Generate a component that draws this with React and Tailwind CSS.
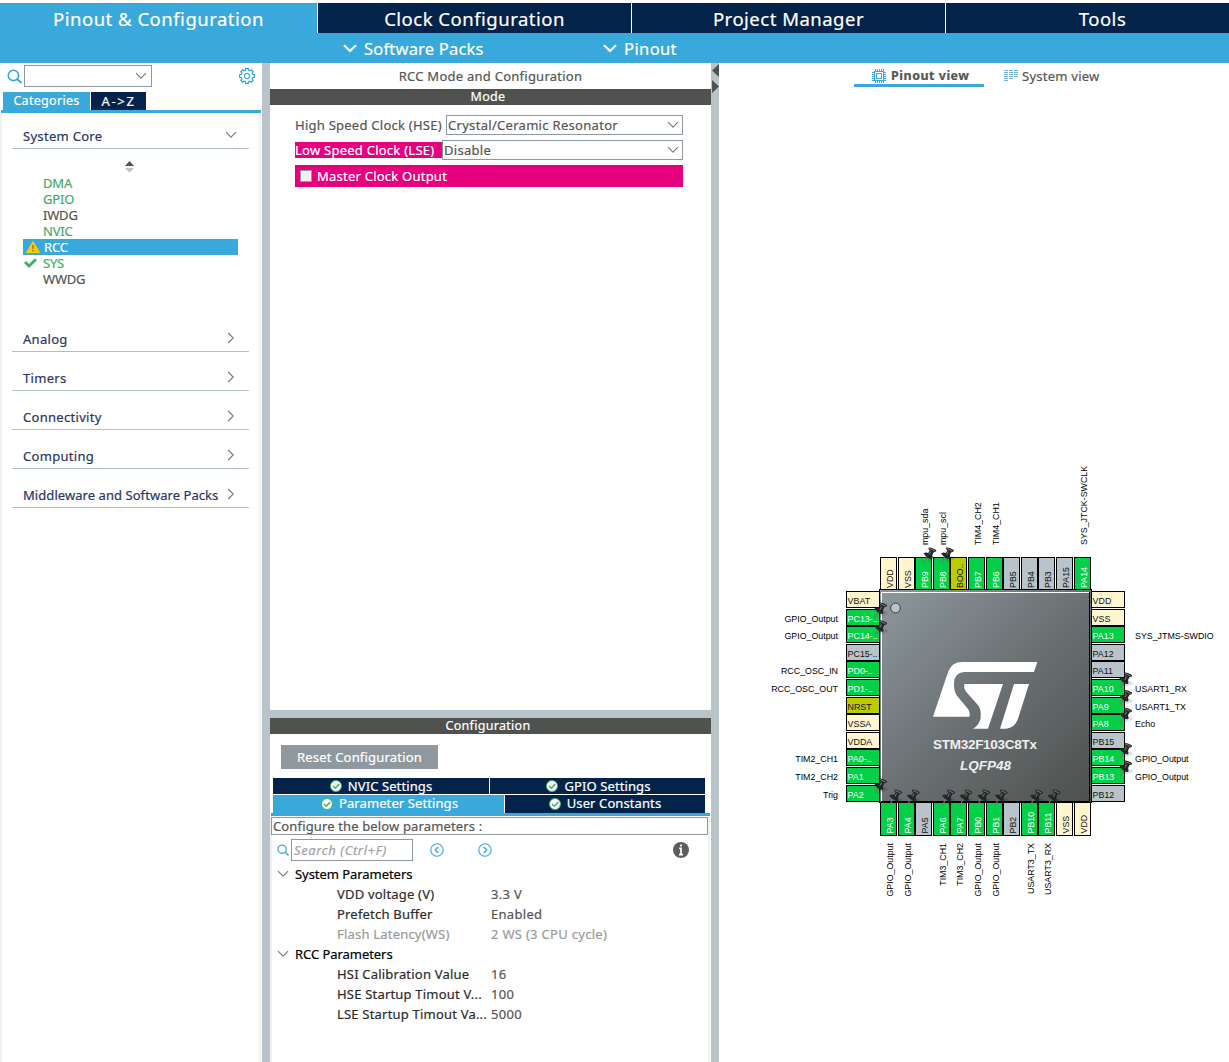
import React from "react";

const Chevron = ({ dir = "down", className = "" }) => (
  <svg
    className={className}
    width={dir === "down" ? 12 : 8}
    height={dir === "down" ? 8 : 12}
    fill="none"
    stroke="#777a7c"
    strokeWidth="1.1"
  >
    <path d={dir === "down" ? "M1 1.2 L6 6.2 L11 1.2" : "M1.2 1 L6.2 6 L1.2 11"} />
  </svg>
);

const MenuChevron = () => (
  <svg width="14" height="9" fill="none" stroke="white" strokeWidth="2.2">
    <path d="M1 1.2 L7 7 L13 1.2" />
  </svg>
);

const SearchIcon = ({ size }) => (
  <svg width={size} height={size} viewBox="0 0 14 14" fill="none" stroke="#39a9dc" strokeWidth="1.5" className="shrink-0">
    <circle cx="6" cy="6" r="4.8" />
    <path d="M9.6 9.6 L13.5 13.2" strokeWidth="1.8" />
  </svg>
);

const teeth = [0, 45, 90, 135, 180, 225, 270, 315];
const Gear = () => (
  <svg width="16" height="16" viewBox="-8 -8 16 16" fill="none" stroke="#39a9dc" strokeWidth="1.3">
    {teeth.map((a) => (
      <path key={a} transform={`rotate(${a})`} d="M-2.3 -5.2 L-1.6 -5.7 L-1.3 -7.4 H1.3 L1.6 -5.7 L2.3 -5.2" />
    ))}
    <circle r="2.6" />
  </svg>
);

const Check = () => (
  <svg width="12" height="12" viewBox="0 0 12 12">
    <circle cx="6" cy="6" r="5.5" fill="#fff" stroke="#3fae6a" strokeWidth="1" />
    <path d="M3 6 L5.3 8.2 L9.2 4" fill="none" stroke="#3fae6a" strokeWidth="1.5" />
  </svg>
);

const MainTab = ({ children, className }) => (
  <div className={"flex h-[30px] items-center justify-center pt-[3px] text-[18.5px] tracking-[0.5px] text-white " + className}>{children}</div>
);

const ComboBox = ({ value, className }) => (
  <div className={"flex h-5 items-center justify-between border border-[#8f989e] bg-white pr-[3px] pl-px " + className}>
    <span>{value}</span>
    <Chevron />
  </div>
);

const periph = [
  ["DMA", "text-[#3fae6a]"],
  ["GPIO", "text-[#3fae6a]"],
  ["IWDG", ""],
  ["NVIC", "text-[#3fae6a]"],
  ["RCC", "text-white bg-[#39a9dc]", "warn"],
  ["SYS", "text-[#3fae6a]", "ok"],
  ["WWDG", ""],
];

const Category = ({ name, open, className = "" }) => (
  <div className="ml-3 flex h-[39px] w-[237px] items-end justify-between border-b border-[#b1bfc6] pr-3 pb-[3px] pl-[11px] text-[#2a3763]">
    <span className={"whitespace-nowrap leading-[18px] " + className}>{name}</span>
    <Chevron dir={open ? "down" : "right"} className={open ? "mb-[6px]" : "mr-0.5 mb-1"} />
  </div>
);

function Sidebar() {
  return (
    <aside className="flex w-[262px] shrink-0 flex-col">
      <div className="flex h-[26px] items-center px-[7px]">
        <SearchIcon size={15} />
        <div className="ml-0.5 flex h-[22px] w-32 items-center justify-end border border-[#8f989e] pr-1">
          <Chevron />
        </div>
        <span className="ml-auto"><Gear /></span>
      </div>
      <div className="mt-[3px] ml-[3px] flex gap-px text-white">
        <div className="flex h-[18px] w-[87px] items-center justify-center bg-[#39a9dc] text-[12.5px]">Categories</div>
        <div className="flex h-[18px] w-[55px] items-center justify-center bg-[#03234b] tracking-[1.7px]">A-&gt;Z</div>
      </div>
      <div className="ml-px h-[3px] w-[260px] bg-[#39a9dc]" />
      <div className="mr-px grow border-x-2 border-[#f1f1f1]">
        <div className="-mt-[3px] -ml-0.5">
          <Category name="System Core" open />
          <div className="flex h-[26px] justify-center pt-3">
            <svg width="9" height="12"><path d="M0 5 L4.5 0 L9 5Z" fill="#50524f" /><path d="M0 7 L4.5 11.5 L9 7Z" fill="#c0c0c0" /></svg>
          </div>
          <ul className="ml-[23px] w-[215px]">
            {periph.map(([n, c, icon]) => (
              <li key={n} className={"flex h-4 items-center text-[13px] tracking-[-0.2px] " + c}>
                <span className={icon === "warn" ? "w-[21px] pl-[3px]" : "w-5 pl-px"}>
                  {icon === "warn" && (
                    <svg width="14" height="12"><path d="M7 0.5 L13.5 11.5 H0.5Z" fill="#fdca0a" stroke="#fdca0a" strokeLinejoin="round" /><path d="M7 4 V8 M7 9 V10.5" stroke="#6b5d20" strokeWidth="1.1" /></svg>
                  )}
                  {icon === "ok" && (
                    <svg width="13" height="10" fill="none" stroke="#3fae6a" strokeWidth="2.8"><path d="M1 4 L5 8 L12 1.2" /></svg>
                  )}
                </span>
                <span className="pt-px">{n}</span>
              </li>
            ))}
          </ul>
          <div className="h-[26px]" />
          {["Analog", "Timers", "Connectivity", "Computing"].map((n) => (
            <Category key={n} name={n} />
          ))}
          <Category name="Middleware and Software Packs" className="tracking-[0.06px]" />
        </div>
      </div>
    </aside>
  );
}

const SectionBar = ({ children }) => (
  <div className="flex h-4 items-center justify-center bg-[#50524f] pt-px pr-[5px] text-[12.5px] text-white">{children}</div>
);

const SettingTab = ({ children, className }) => (
  <div className={"flex items-center justify-center gap-[6px] tracking-[0.1px] text-white " + className}><Check />{children}</div>
);

const Param = ({ name, value, muted }) => (
  <div className={"flex h-5 items-center pl-[67px] " + (muted ? "text-[#9a9a9a]" : "text-[#2c2c2c]")}>
    <span className="w-[154px] whitespace-nowrap tracking-[0.2px]">{name}</span>
    <span className={muted ? "" : "text-[#555]"}>{value}</span>
  </div>
);

const Group = ({ name }) => (
  <div className="flex h-5 items-center pl-[7px] text-black"><Chevron /><span className="ml-[6px] tracking-[-0.05px]">{name}</span></div>
);

const RoundArrow = ({ left }) => (
  <svg width="14" height="14" fill="none" stroke="#39a9dc" strokeWidth="1.1">
    <circle cx="7" cy="7" r="6.2" />
    <path d={left ? "M8.3 4 L5.3 7 L8.3 10" : "M5.7 4 L8.7 7 L5.7 10"} strokeWidth="1.4" />
  </svg>
);

function ModePanel() {
  return (
    <section className="flex w-[441px] shrink-0 flex-col">
      <div className="flex h-[647px] flex-col">
        <div className="flex h-[26px] items-center justify-center tracking-[0.25px]">RCC Mode and Configuration</div>
        <SectionBar>Mode</SectionBar>
        <div className="mt-[10px] ml-[25px] flex w-[388px] items-center">
          <span className="w-[151px] whitespace-nowrap tracking-[0.25px]">High Speed Clock (HSE)</span>
          <ComboBox value="Crystal/Ceramic Resonator" className="grow" />
        </div>
        <div className="mt-[5px] ml-[25px] flex w-[388px] items-center">
          <span className="flex h-4 w-[147px] items-center bg-[#e6007e] tracking-[0.25px] whitespace-nowrap text-white">Low Speed Clock (LSE)</span>
          <ComboBox value="Disable" className="grow" />
        </div>
        <div className="mt-[5px] ml-[25px] flex h-[22px] w-[388px] items-center bg-[#e6007e] pl-[5px] tracking-[0.23px] text-white">
          <span className="mr-[5px] h-3 w-3 border border-[#8f989e] bg-[#eef0f1]" />
          Master Clock Output
        </div>
      </div>
      <div className="h-2 bg-[#b8c4ca]" />
      <SectionBar>Configuration</SectionBar>
      <div className="mt-[11px] ml-[11px] flex h-6 w-[157px] items-center justify-center bg-[#8f989e] tracking-[0.2px] text-white">Reset Configuration</div>
      <div className="mt-[9px] ml-[3px] flex w-[432px] gap-px">
        <SettingTab className="h-4 w-[216px] bg-[#03234b]">NVIC Settings</SettingTab>
        <SettingTab className="h-4 w-[215px] bg-[#03234b] pl-0.5">GPIO Settings</SettingTab>
      </div>
      <div className="mt-px ml-[3px] flex w-[432px] gap-px">
        <SettingTab className="h-[18px] w-[231px] bg-[#39a9dc] pb-px pl-0.5">Parameter Settings</SettingTab>
        <SettingTab className="h-[18px] w-[200px] bg-[#03234b] pb-px">User Constants</SettingTab>
      </div>
      <div className="ml-px h-[3px] w-[439px] bg-[#39a9dc]" />
      <div className="mr-px grow border-x-2 border-[#f1f1f1]">
        <div className="mt-px -ml-px flex h-[18px] w-[437px] items-center border border-[#8f989e] bg-white pl-px tracking-[0.14px]">Configure the below parameters :</div>
        <div className="mt-1 flex h-[22px] items-center pl-[5px]">
          <SearchIcon size={12} />
          <div className="ml-0.5 flex h-[22px] w-[122px] items-center border border-[#8f989e] pl-0.5 tracking-[0.6px] text-[#a3a3a3] italic">Search (Ctrl+F)</div>
          <span className="ml-[17px]"><RoundArrow left /></span>
          <span className="ml-[34px]"><RoundArrow /></span>
          <svg className="ml-[181px]" width="16" height="16"><circle cx="8" cy="8" r="8" fill="#5c5e5d" /><path d="M8 2.6 V4.6 M6.2 6.4 H8 V12.6 M6 12.6 H10" fill="none" stroke="#fff" strokeWidth="1.7" /></svg>
        </div>
        <div className="mt-[3px] -ml-0.5">
          <Group name="System Parameters" />
          <Param name="VDD voltage (V)" value="3.3 V" />
          <Param name="Prefetch Buffer" value="Enabled" />
          <Param name="Flash Latency(WS)" value="2 WS (3 CPU cycle)" muted />
          <Group name="RCC Parameters" />
          <Param name="HSI Calibration Value" value="16" />
          <Param name="HSE Startup Timout V..." value="100" />
          <Param name="LSE Startup Timout Va..." value="5000" />
        </div>
      </div>
    </section>
  );
}

const C = { p: "#fff5cf", g: "#03d046", s: "#b8c4ca", o: "#bbcc01" };
const PITCH = 17.6;
// [pin name, colour key, assigned signal, pinned]
const leftPins = [["VBAT", "p"], ["PC13-..", "g", "GPIO_Output", 1], ["PC14-..", "g", "GPIO_Output", 1], ["PC15-..", "s"], ["PD0-..", "g", "RCC_OSC_IN"], ["PD1-..", "g", "RCC_OSC_OUT"], ["NRST", "o"], ["VSSA", "p"], ["VDDA", "p"], ["PA0-..", "g", "TIM2_CH1"], ["PA1", "g", "TIM2_CH2"], ["PA2", "g", "Trig", 1]];
const rightPins = [["VDD", "p"], ["VSS", "p"], ["PA13", "g", "SYS_JTMS-SWDIO"], ["PA12", "s"], ["PA11", "s"], ["PA10", "g", "USART1_RX", 1], ["PA9", "g", "USART1_TX", 1], ["PA8", "g", "Echo", 1], ["PB15", "s"], ["PB14", "g", "GPIO_Output", 1], ["PB13", "g", "GPIO_Output", 1], ["PB12", "s"]];
const topPins = [["VDD", "p"], ["VSS", "p"], ["PB9", "g", "mpu_sda", 1], ["PB8", "g", "mpu_scl", 1], ["BOO..", "o"], ["PB7", "g", "TIM4_CH2"], ["PB6", "g", "TIM4_CH1"], ["PB5", "s"], ["PB4", "s"], ["PB3", "s"], ["PA15", "s"], ["PA14", "g", "SYS_JTCK-SWCLK"]];
const bottomPins = [["PA3", "g", "GPIO_Output", 1], ["PA4", "g", "GPIO_Output", 1], ["PA5", "s"], ["PA6", "g", "TIM3_CH1", 1], ["PA7", "g", "TIM3_CH2", 1], ["PB0", "g", "GPIO_Output", 1], ["PB1", "g", "GPIO_Output", 1], ["PB2", "s"], ["PB10", "g", "USART3_TX", 1], ["PB11", "g", "USART3_RX", 1], ["VSS", "p"], ["VDD", "p"]];

const Tack = ({ x, y }) => (
  <g transform={`translate(${x} ${y})`}>
    <path d="M4 11 L12 9 L14 12 L6 15Z" fill="#000" opacity="0.12" />
    <path d="M4 10 L1 15.5" stroke="#777" strokeWidth="1.2" />
    <path d="M0.3 6.2 Q3 5 5 6 L6.5 3.6 Q5 2 5.2 0.8 Q8 -0.4 13 3 Q13.4 5 10.5 5.2 L9 8 Q10 10.5 9 12 Q4 12 0.3 6.2Z" fill="#262626" />
    <path d="M6.4 1.5 L11.6 4 M7.6 4.4 L6 7.6" stroke="#8a8a8a" strokeWidth="0.9" />
  </g>
);

const ink = (c) => (c === "g" ? "#fff" : "#111");

function SidePins({ pins, x, w, labelX, anchor }) {
  return pins.map(([n, c, sig], i) => {
    const y = Math.round(591 + i * PITCH);
    return (
      <g key={n}>
        <rect x={x + 0.5} y={y + 0.5} width={w} height="16" fill={C[c]} stroke="#000" />
        <text x={x + 1.6} y={y + 13} fill={ink(c)}>{n}</text>
        {sig && <text x={labelX} y={y + 13} textAnchor={anchor} fill="#000">{sig}</text>}
      </g>
    );
  });
}

function RowPins({ pins, y, h, textY, labelY, anchor }) {
  return pins.map(([n, c, sig], i) => {
    const x = Math.round(880 + i * PITCH);
    return (
      <g key={n}>
        <rect x={x + 0.5} y={y + 0.5} width="16" height={h} fill={C[c]} stroke="#000" />
        <text transform={`translate(${x + 13} ${textY}) rotate(-90)`} fill={ink(c)}>{n}</text>
        {sig && <text transform={`translate(${x + 13} ${labelY}) rotate(-90)`} textAnchor={anchor} fill="#000">{sig}</text>}
      </g>
    );
  });
}

const tacks = (pins, at) => pins.map((p, i) => p[3] && <Tack key={p[0]} {...at(i * PITCH)} />);

function Chip() {
  return (
    <svg width="510" height="460" viewBox="719 460 510 460" className="font-['Liberation_Sans',Arial,sans-serif] text-[8.85px] tracking-normal">
      <defs>
        <linearGradient id="body" x1="0" y1="0" x2="1" y2="1">
          <stop offset="0" stopColor="#8d989e" />
          <stop offset="0.5" stopColor="#6b7173" />
          <stop offset="1" stopColor="#4c504e" />
        </linearGradient>
      </defs>
      <SidePins pins={leftPins} x={846} w={33} labelX={838} anchor="end" />
      <SidePins pins={rightPins} x={1091} w={33} labelX={1135} anchor="start" />
      <RowPins pins={topPins} y={557} h={33} textY={588} labelY={545} anchor="start" />
      <RowPins pins={bottomPins} y={802} h={33} textY={833.5} labelY={843} anchor="end" />
      <rect x="879.5" y="589.5" width="212" height="213" fill="url(#body)" stroke="#000" />
      <path d="M881.5 801 V592.5 H1089" fill="none" stroke="#fff" />
      <path d="M1089.5 592 V801.5 H881" fill="none" stroke="#000" />
      <circle cx="895.5" cy="608" r="4.9" fill="#b8c4ca" stroke="#3c3f40" />
      <g transform="translate(900 640) scale(0.3333)" fill="#fff">
        <path d="M99 230 L145 94 Q156 66 187 66 H412 L402 96 H192 Q163 98 162 130 Q161 153 171 167 L204 207 Q212 218 208 230Z" />
        <path d="M193 132 H309 L264 266 H219 Q236 258 242 235 Q244 210 236 198 Q220 180 197 154 Q190 144 193 132Z" />
        <path d="M342 132 H387 L354 236 Q344 264 318 266 H300Z" />
      </g>
      <text x="985" y="749" textAnchor="middle" textLength="104" fill="#eef0f1" className="text-[13.5px] font-bold">STM32F103C8Tx</text>
      <text x="985.5" y="770" textAnchor="middle" textLength="51" fill="#eef0f1" className="text-[13.5px] font-bold italic">LQFP48</text>
      {tacks(leftPins, (d) => ({ x: 874, y: 584.5 + d }))}
      {tacks(rightPins, (d) => ({ x: 1119, y: 584 + d }))}
      {tacks(topPins, (d) => ({ x: 888 + d, y: 547 }))}
      {tacks(bottomPins, (d) => ({ x: 889 + d, y: 789 }))}
    </svg>
  );
}

const rows = [1.5, 3.5, 5.5, 7.5, 9.5, 11.5];
// Segments of each dotted column, shortening from left to right.
const rowPath = (y, i) => `M0 ${y}H4` + (i < 5 ? `M5 ${y}H9` : "") + (i < 4 ? `M10 ${y}H14` : "");

function PinoutPanel() {
  return (
    <section className="flex grow flex-col">
      <div className="flex pl-[135px]">
        <div className="flex h-6 w-[130px] items-center border-b-[3px] border-[#39a9dc] pt-[5px] pl-[18px] font-bold text-[#555]">
          <svg width="14" height="14" fill="none" stroke="#39a9dc">
            <rect x="2.5" y="2.5" width="9" height="9" /><rect x="4.5" y="4.5" width="5" height="5" />
            <path d="M3 1 H12 M3 13 H12" strokeWidth="2" strokeDasharray="1 1" />
            <path d="M1 3 V12 M13 3 V12" strokeWidth="2" strokeDasharray="1 1" />
          </svg>
          <span className="ml-[5px] pt-px text-[12.5px] tracking-[0.5px] whitespace-nowrap">Pinout view</span>
        </div>
        <div className="ml-5 flex h-6 items-center pt-0.5">
          <svg width="14" height="14" fill="none" stroke="#6fb4d6">
            {rows.map((y, i) => (
              <path key={y} d={rowPath(y, i)} />
            ))}
          </svg>
          <span className="ml-1 tracking-[0.25px] whitespace-nowrap">System view</span>
        </div>
      </div>
      <div className="mt-[373px]"><Chip /></div>
    </section>
  );
}

export default function App() {
  return (
    <div className="flex h-[1062px] w-[1229px] flex-col overflow-hidden bg-white pt-[3px] font-['Noto_Sans','Open_Sans',sans-serif] text-[13px] leading-none tracking-[0.3px] text-[#555] [-webkit-text-stroke:0.2px]">
      <header className="flex gap-px">
        <MainTab className="w-[317px] bg-[#39a9dc]">Pinout &amp; Configuration</MainTab>
        <MainTab className="w-[313px] bg-[#03234b]">Clock Configuration</MainTab>
        <MainTab className="w-[313px] bg-[#03234b]">Project Manager</MainTab>
        <MainTab className="grow bg-[#03234b] pl-[30px]">Tools</MainTab>
      </header>
      <nav className="flex h-[30px] items-center bg-[#39a9dc] pl-[343px] text-[16.5px] tracking-[0.2px] text-white">
        <div className="flex w-[260px] items-center gap-[7px]"><MenuChevron /><span className="pt-0.5">Software Packs</span></div>
        <div className="flex items-center gap-[7px]"><MenuChevron /><span className="pt-0.5 tracking-[0.4px]">Pinout</span></div>
      </nav>
      <main className="flex grow">
        <Sidebar />
        <div className="w-2 shrink-0 bg-[#b8c4ca]" />
        <ModePanel />
        <div className="w-2 shrink-0 bg-[#b8c4ca]">
          <svg width="8" height="32" fill="#50524f"><path d="M8 1 V14 L1 7.5Z" /><path d="M1 17 V30 L8 23.5Z" /></svg>
        </div>
        <PinoutPanel />
      </main>
    </div>
  );
}
